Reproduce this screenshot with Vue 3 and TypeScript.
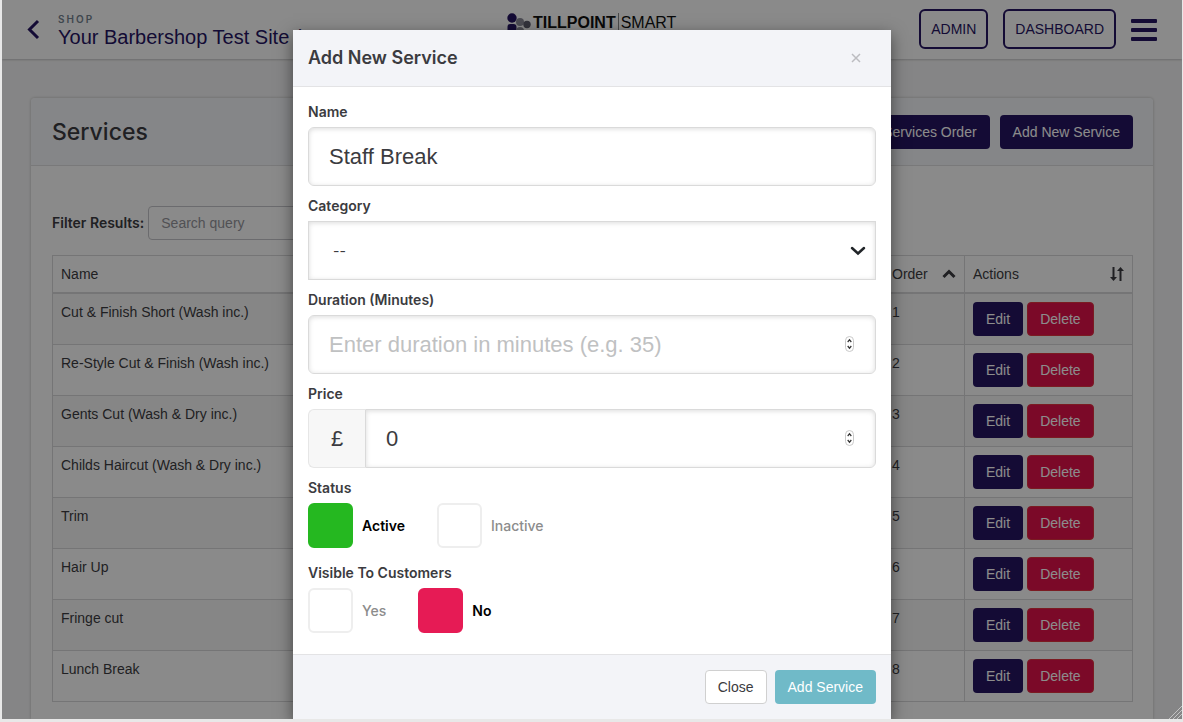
<script setup lang="ts">
import { ref } from 'vue'

interface Service {
  order: number
  name: string
}

const services: Service[] = [
  'Cut & Finish Short (Wash inc.)',
  'Re-Style Cut & Finish (Wash inc.)',
  'Gents Cut (Wash & Dry inc.)',
  'Childs Haircut (Wash & Dry inc.)',
  'Trim',
  'Hair Up',
  'Fringe cut',
  'Lunch Break',
].map((name, i) => ({ name, order: i + 1 }))

const query = ref('')
const name = ref('Staff Break')
const category = ref('')
const duration = ref('')
const price = ref('0')
const status = ref('active')
const visible = ref('no')
</script>

<template>
  <div class="window">
    <div class="page">
      <header class="topbar">
        <a class="back" href="#" aria-label="Back">
          <svg width="14" height="22" viewBox="0 0 14 22" fill="none" stroke="currentColor" stroke-width="3"><path d="M11 2 2.500 10.500 11 19" /></svg>
        </a>
        <div class="site">
          <div class="eyebrow">SHOP</div>
          <div class="site-name">Your Barbershop Test Site (</div>
        </div>
        <div class="logo">
          <svg width="24" height="26" viewBox="0 0 24 26">
            <circle cx="5" cy="5" r="4.7" fill="#251461" />
            <rect x="0.5" y="11" width="9" height="10" rx="3" fill="#251461" />
            <circle cx="13" cy="9" r="4" fill="#8b8b98" />
            <circle cx="13" cy="18" r="4" fill="#8b8b98" />
            <circle cx="20" cy="11.500" r="3.700" fill="#5b5b6c" />
          </svg>
          <span class="logo-main">TILLPOINT</span>
          <span class="logo-sub">SMART</span>
        </div>
        <nav class="nav">
          <a class="outline" href="#">ADMIN</a>
          <a class="outline" href="#">DASHBOARD</a>
          <button class="burger" type="button" aria-label="Menu"><i></i><i></i><i></i></button>
        </nav>
      </header>

      <main class="card">
        <div class="card-head">
          <h1>Services</h1>
          <div class="actions">
            <button class="btn navy" type="button">Services Order</button>
            <button class="btn navy" type="button">Add New Service</button>
          </div>
        </div>
        <div class="card-body">
          <div class="filter">
            <label for="query">Filter Results:</label>
            <input id="query" v-model="query" type="text" placeholder="Search query" />
          </div>
          <table>
            <thead>
              <tr>
                <th>Name</th>
                <th class="col-order">
                  <div class="th">
                    Order
                    <svg width="14" height="10" viewBox="0 0 14 10" fill="none" stroke="currentColor" stroke-width="3"><path d="M1.500 8 7 2.500 12.500 8" /></svg>
                  </div>
                </th>
                <th class="col-actions">
                  <div class="th">
                    Actions
                    <svg width="14" height="16" viewBox="0 0 14 16" fill="currentColor"><path d="M2.500 1h2v10H7l-3.500 4L0 11h2.500zM9.500 15h2V5H14l-3.500-4L7 5h2.500z" /></svg>
                  </div>
                </th>
              </tr>
            </thead>
            <tbody>
              <tr v-for="s in services" :key="s.order">
                <td>{{ s.name }}</td>
                <td>{{ s.order }}</td>
                <td>
                  <div class="row-actions">
                    <button class="btn navy" type="button">Edit</button>
                    <button class="btn red" type="button">Delete</button>
                  </div>
                </td>
              </tr>
            </tbody>
          </table>
        </div>
      </main>
    </div>

    <div class="backdrop">
      <form class="modal" role="dialog" aria-labelledby="modal-title" @submit.prevent>
        <div class="modal-head">
          <h2 id="modal-title">Add New Service</h2>
          <button class="close" type="button" aria-label="Close dialog">
            <svg width="10" height="10" viewBox="0 0 10 10" stroke="currentColor" stroke-width="1.500"><path d="m1 1 8 8M9 1 1 9" /></svg>
          </button>
        </div>

        <div class="modal-body">
          <div class="field">
            <label for="name">Name</label>
            <input id="name" v-model="name" class="control" type="text" />
          </div>
          <div class="field">
            <label for="category">Category</label>
            <div class="wrap">
              <select id="category" v-model="category" class="control">
                <option value="">--</option>
              </select>
              <svg class="chevron" width="16" height="10" viewBox="0 0 16 10" fill="none" stroke="#212529" stroke-width="2.500" stroke-linecap="round"><path d="m2 2 6 5.500L14 2" /></svg>
            </div>
          </div>
          <div class="field">
            <label for="duration">Duration (Minutes)</label>
            <div class="wrap">
              <input id="duration" v-model="duration" class="control" type="number" placeholder="Enter duration in minutes (e.g. 35)" />
              <svg class="spinner" width="9" height="16" viewBox="0 0 9 16" fill="none"><rect x="0.500" y="0.500" width="8" height="15" rx="4" stroke="#c9c9c9" /><path d="m2.700 6 1.800-2.200L6.300 6M2.700 10l1.800 2.200L6.300 10" stroke="#333" stroke-width="1.200" /></svg>
            </div>
          </div>
          <div class="field">
            <label for="price">Price</label>
            <div class="group">
              <span class="addon">£</span>
              <div class="wrap grow">
                <input id="price" v-model="price" class="control joined" type="number" />
                <svg class="spinner" width="9" height="16" viewBox="0 0 9 16" fill="none"><rect x="0.500" y="0.500" width="8" height="15" rx="4" stroke="#c9c9c9" /><path d="m2.700 6 1.800-2.200L6.300 6M2.700 10l1.800 2.200L6.300 10" stroke="#333" stroke-width="1.200" /></svg>
              </div>
            </div>
          </div>
          <fieldset>
            <legend>Status</legend>
            <div class="choices">
              <label class="choice"><input v-model="status" class="yes" type="radio" name="status" value="active" /><span>Active</span></label>
              <label class="choice"><input v-model="status" class="no" type="radio" name="status" value="inactive" /><span>Inactive</span></label>
            </div>
          </fieldset>
          <fieldset>
            <legend>Visible To Customers</legend>
            <div class="choices">
              <label class="choice"><input v-model="visible" class="yes" type="radio" name="visible" value="yes" /><span>Yes</span></label>
              <label class="choice"><input v-model="visible" class="no" type="radio" name="visible" value="no" /><span>No</span></label>
            </div>
          </fieldset>
        </div>

        <div class="modal-foot">
          <button class="btn plain" type="button">Close</button>
          <button class="btn teal" type="submit">Add Service</button>
        </div>
      </form>
      <svg class="grip" width="14" height="14" viewBox="0 0 14 14" stroke="#c4c4c4" stroke-width="1"><path d="M1 14 14 1M5 14l9-9M9 14l5-5" /></svg>
    </div>
  </div>
</template>

<style>
body {
  margin: 0;
  background: #e8e8e8;
}
</style>

<style scoped>
* {
  box-sizing: border-box;
}

.window {
  position: relative;
  height: calc(100vh - 3px);
  margin: 0 1px 0 2px;
  overflow: hidden;
  font: 14px/20px "Liberation Sans", Arial, sans-serif;
  color: #3b3b40;
}

button,
input,
select {
  margin: 0;
  font: inherit;
  color: inherit;
}

a {
  color: inherit;
  text-decoration: none;
}

.page {
  min-height: 100%;
  background: #f3f3f4;
}

.topbar {
  display: flex;
  align-items: center;
  height: 59px;
  padding: 0 25px;
  background: #fcfcfc;
  box-shadow: 0 1px 2px rgba(0, 0, 0, 0.2);
  color: #251461;
}

.back {
  display: flex;
  width: 31px;
}

.site {
  width: 449px;
  padding-top: 2px;
  white-space: nowrap;
}

.eyebrow {
  font-family: Inter, "Liberation Sans", sans-serif;
  font-size: 10px;
  line-height: 12px;
  font-weight: 600;
  letter-spacing: 2px;
  color: #73818f;
}

.site-name {
  font-size: 20px;
  line-height: 24px;
}

.logo {
  display: flex;
  align-self: flex-start;
  gap: 2px;
  padding-top: 13px;
  color: #111;
  font-size: 16px;
  line-height: 20px;
}

.logo-main {
  font-weight: 700;
}

.logo-sub {
  padding-left: 2px;
  border-left: 1px solid #888;
}

.nav {
  display: flex;
  align-items: center;
  gap: 15px;
  margin-left: auto;
}

.outline {
  padding: 8px 10px;
  border: 2px solid #251461;
  border-radius: 6px;
  line-height: 20px;
  margin-top: -2px;
}

.burger {
  display: grid;
  gap: 5px;
  width: 26px;
  padding: 0;
  border: 0;
  background: none;
}

.burger i {
  height: 4px;
  border-radius: 1px;
  background: #251461;
}

.card {
  margin: 39px 29px 0;
  background: #fcfcfc;
  border-radius: 4px 4px 0 0;
  box-shadow: 0 0 3px rgba(0, 0, 0, 0.25);
}

.card-head {
  display: flex;
  align-items: center;
  justify-content: space-between;
  height: 68px;
  padding: 0 20px 0 21px;
  border-bottom: 1px solid #dcdcde;
  border-radius: 4px 4px 0 0;
  background: #f3f4f8;
}

h1 {
  margin: 0;
  font-family: Inter, "Liberation Sans", sans-serif;
  font-size: 23px;
  line-height: 28px;
  font-weight: 500;
}

.actions {
  display: flex;
  gap: 10px;
}

.btn {
  height: 34px;
  padding: 0 12px;
  border: 1px solid transparent;
  border-radius: 4px;
  white-space: nowrap;
}

.navy {
  background: #251461;
  color: #fff;
}

.red {
  background: #e0124a;
  border-color: #e0323e;
  color: #fff;
}

.card-body {
  padding: 40px 20px 17px 21px;
}

.filter {
  display: flex;
  align-items: center;
  gap: 4px;
  margin-bottom: 15px;
}

.filter label {
  font-family: Inter, "Liberation Sans", sans-serif;
  font-weight: 600;
}

.filter input {
  width: 240px;
  height: 34px;
  padding: 0 12px;
  border: 1px solid #c4c4c8;
  border-radius: 4px;
  background: #fcfcfc;
}

.filter input::placeholder {
  color: #94949a;
  opacity: 1;
}

table {
  width: 100%;
  border: 1px solid #d5d5d8;
  border-collapse: collapse;
  table-layout: fixed;
}

th,
td {
  padding: 8px;
  border: 1px solid #d5d5d8;
  text-align: left;
  vertical-align: top;
  font-weight: 400;
}

th {
  border-bottom-width: 2px;
}

tbody tr:nth-child(odd) {
  background: #f5f5f5;
}

.col-order {
  width: 81px;
}

.col-actions {
  width: 168px;
}

.th {
  display: flex;
  align-items: center;
  justify-content: space-between;
}

.row-actions {
  display: flex;
  gap: 4px;
}

.backdrop {
  position: absolute;
  inset: 0;
  display: flex;
  justify-content: center;
  align-items: flex-start;
  padding-top: 30px;
  background: rgba(0, 0, 0, 0.45);
}

.grip {
  position: absolute;
  right: 0;
  bottom: 0;
}

.modal {
  width: 598px;
  background: #fff;
  box-shadow: 0 5px 15px rgba(0, 0, 0, 0.5);
}

.modal-head {
  display: flex;
  align-items: center;
  justify-content: space-between;
  height: 57px;
  padding: 0 30px 0 15px;
  border-bottom: 1px solid #e3e3e5;
  background: #f3f4f8;
}

h2 {
  margin: 0;
  font-family: Inter, "Liberation Sans", sans-serif;
  font-size: 18px;
  line-height: 24px;
  font-weight: 600;
}

.close {
  display: flex;
  padding: 0;
  border: 0;
  background: none;
  color: #bcbcc0;
}

.modal-body {
  padding: 15px 15px 6px;
}

.field {
  margin-bottom: 10px;
}

.field > label,
legend {
  display: block;
  margin-bottom: 5px;
  padding: 0;
  font-family: Inter, "Liberation Sans", sans-serif;
  font-weight: 600;
}

.wrap {
  position: relative;
}

.grow {
  flex: 1;
}

.control {
  display: block;
  width: 100%;
  height: 59px;
  padding: 0 20px;
  border: 1px solid #dadada;
  border-radius: 6px;
  background: #fff;
  box-shadow: inset 0 1px 5px rgba(0, 0, 0, 0.14);
  font-size: 22px;
  appearance: none;
}

.control::placeholder {
  color: #bfc1c2;
  opacity: 1;
}

input[type="number"] {
  appearance: textfield;
}

select.control {
  padding: 0 24px;
  border-radius: 0;
  font-family: Inter, "Liberation Sans", sans-serif;
  font-size: 14px;
}

.chevron,
.spinner {
  position: absolute;
  right: 10px;
  top: 25px;
  pointer-events: none;
}

.spinner {
  right: 22px;
  top: 21px;
}

.group {
  display: flex;
}

.addon {
  width: 57px;
  border: 1px solid #e6e6e6;
  border-right: 0;
  border-radius: 6px 0 0 6px;
  background: #f7f7f7;
  font-size: 22px;
  line-height: 57px;
  text-align: center;
}

.joined {
  border-radius: 0 6px 6px 0;
}

fieldset {
  margin: 0 0 15px;
  padding: 0;
  border: 0;
}

.choices {
  display: flex;
  gap: 32px;
}

.choice {
  display: flex;
  align-items: center;
  gap: 9px;
  font-family: Inter, "Liberation Sans", sans-serif;
  font-weight: 500;
  color: #8c8c8c;
}

.choice:has(:checked) {
  font-weight: 600;
  color: #000;
}

.choice input {
  width: 45px;
  height: 45px;
  border: 2px solid #eee;
  border-radius: 6px;
  background: #fff;
  appearance: none;
}

.choice .yes:checked {
  border-color: #25b820;
  background: #25b820;
}

.choice .no:checked {
  border-color: #e61b55;
  background: #e61b55;
}

.modal-foot {
  display: flex;
  justify-content: flex-end;
  gap: 8px;
  padding: 15px;
  border-top: 1px solid #e3e3e5;
  background: #f3f4f8;
}

.plain {
  border-color: #d0d0d0;
  background: #fff;
}

.teal {
  background: #70bac8;
  color: #fff;
}
</style>
